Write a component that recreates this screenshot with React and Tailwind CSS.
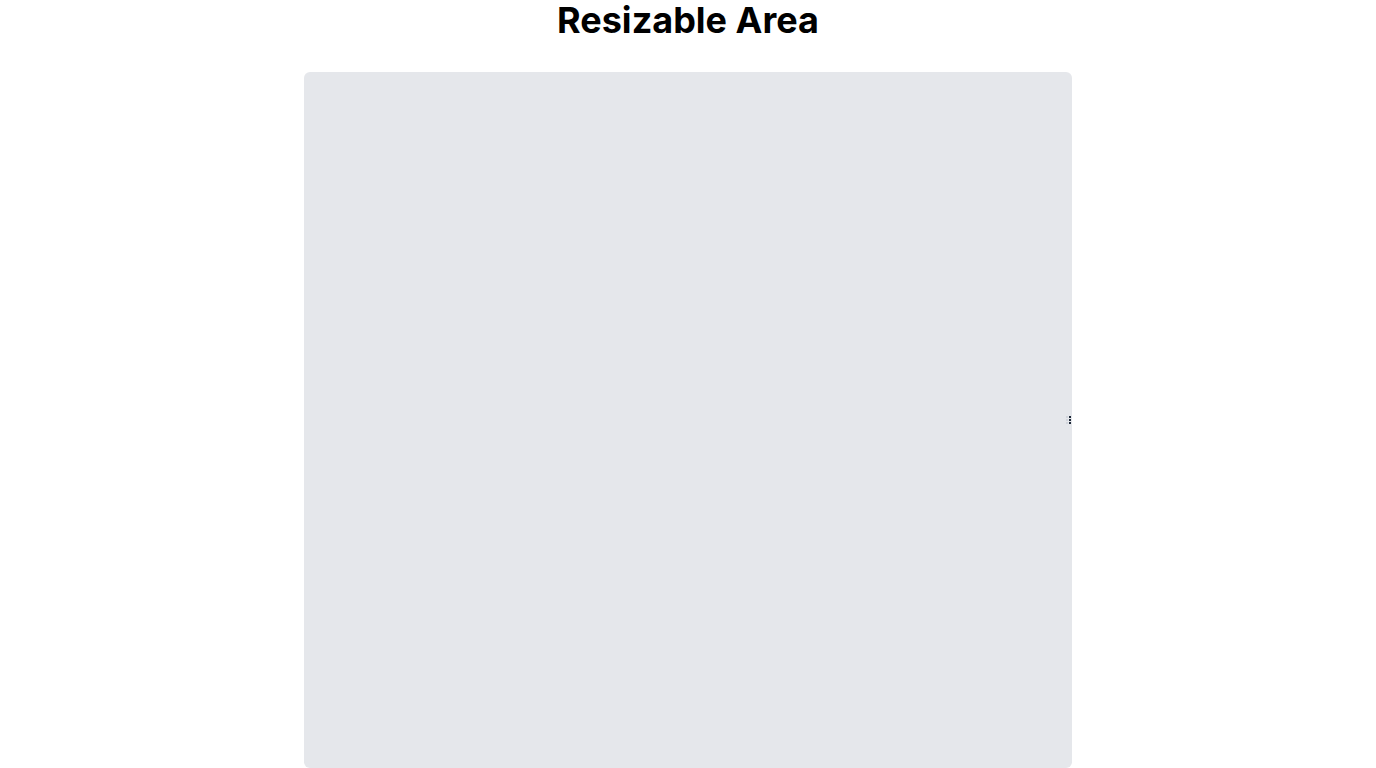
import React from "react";

export default function App() {
  return (
    <div className="min-h-screen bg-white flex flex-col items-center" style={{ fontFamily: "Inter, 'Noto Sans', sans-serif" }}>
      <h1 className="text-4xl font-bold text-black mb-8 leading-10">Resizable Area</h1>
      <div className="relative w-[768px] h-[696px] bg-gray-200 rounded-md">
        <div className="absolute right-[1px] top-[344px] flex gap-[1px]">
          <div className="flex flex-col gap-[1px]">
            <span className="block w-[2px] h-[2px] bg-gray-300" />
            <span className="block w-[2px] h-[2px] bg-gray-300" />
            <span className="block w-[2px] h-[2px] bg-gray-300" />
          </div>
          <div className="flex flex-col gap-[1px]">
            <span className="block w-[2px] h-[2px] bg-gray-800" />
            <span className="block w-[2px] h-[2px] bg-gray-800" />
            <span className="block w-[2px] h-[2px] bg-gray-800" />
          </div>
        </div>
      </div>
    </div>
  );
}
